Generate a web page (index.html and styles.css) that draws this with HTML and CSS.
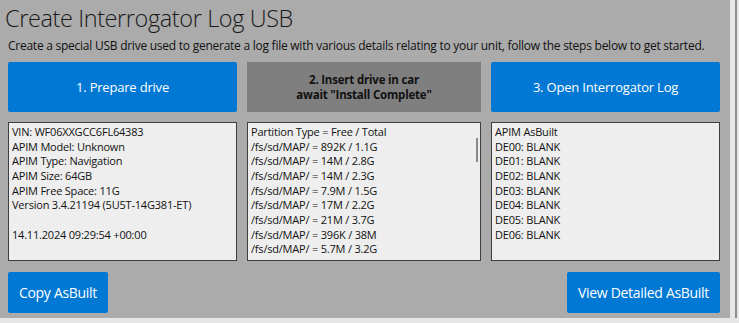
FILE: index.html
```html
<!DOCTYPE html>
<html>
<head>
<meta charset="utf-8">
<link rel="stylesheet" href="styles.css">
</head>
<body>
<div class="panel">
  <h1 class="title">Create Interrogator Log USB</h1>
  <p class="sub">Create a special USB drive used to generate a log file with various details relating to your unit, follow the steps below to get started.</p>
  <div class="grid">
    <button class="btn blue">1. Prepare drive</button>
    <button class="btn gray">2. Insert drive in car<br>await "Install Complete"</button>
    <button class="btn blue">3. Open Interrogator Log</button>
    <div class="box">
      <div>VIN: WF06XXGCC6FL64383</div>
      <div>APIM Model: Unknown</div>
      <div>APIM Type: Navigation</div>
      <div>APIM Size: 64GB</div>
      <div>APIM Free Space: 11G</div>
      <div>Version 3.4.21194 (5U5T-14G381-ET)</div>
      <div>&nbsp;</div>
      <div>14.11.2024 09:29:54 +00:00</div>
    </div>
    <div class="box scroll">
      <div>Partition Type = Free / Total</div>
      <div>/fs/sd/MAP/ = 892K / 1.1G</div>
      <div>/fs/sd/MAP/ = 14M / 2.8G</div>
      <div>/fs/sd/MAP/ = 14M / 2.3G</div>
      <div>/fs/sd/MAP/ = 7.9M / 1.5G</div>
      <div>/fs/sd/MAP/ = 17M / 2.2G</div>
      <div>/fs/sd/MAP/ = 21M / 3.7G</div>
      <div>/fs/sd/MAP/ = 396K / 38M</div>
      <div>/fs/sd/MAP/ = 5.7M / 3.2G</div>
      <div>/fs/sd/MAP/ = 24M / 3.1G</div>
      <span class="thumb"></span>
    </div>
    <div class="box">
      <div>APIM AsBuilt</div>
      <div>DE00: BLANK</div>
      <div>DE01: BLANK</div>
      <div>DE02: BLANK</div>
      <div>DE03: BLANK</div>
      <div>DE04: BLANK</div>
      <div>DE05: BLANK</div>
      <div>DE06: BLANK</div>
    </div>
  </div>
  <div class="actions">
    <button class="btn blue small">Copy AsBuilt</button>
    <button class="btn blue small">View Detailed AsBuilt</button>
  </div>
</div>
<div class="vscroll"></div>
</body>
</html>
```
FILE: styles.css
```css
html, body {
  margin: 0;
  padding: 0;
}
body {
  background: #e6e6e6;
  width: 739px;
  height: 323px;
  overflow: hidden;
  font-family: "Open Sans", "Noto Sans", sans-serif;
  color: #111;
}
.panel {
  width: 730px;
  height: 318px;
  box-sizing: border-box;
  background: #ababab;
  padding: 0 10px 0 8px;
  display: flex;
  flex-direction: column;
}
.title {
  margin: 3px 0 0 -3px;
  font-weight: 300;
  font-size: 23.5px;
  line-height: 30px;
  color: #1a1a1a;
  letter-spacing: -0.4px;
}
.sub {
  margin: 5px 0 0 0;
  font-size: 12px;
  line-height: 16px;
  letter-spacing: -0.25px;
  white-space: nowrap;
  color: #111;
}
.grid {
  margin-top: 8px;
  display: grid;
  grid-template-columns: 229px 234px 229px;
  grid-template-rows: 50px 139px;
  column-gap: 10px;
  row-gap: 10px;
}
.btn {
  border: none;
  border-radius: 2px;
  font-family: "Open Sans", "Noto Sans", sans-serif;
  padding: 0;
  margin: 0;
  white-space: nowrap;
}
.blue {
  background: #0078d4;
  color: #fff;
  font-size: 13px;
  letter-spacing: -0.2px;
}
.gray {
  background: #7f7f7f;
  color: #111;
  font-weight: 700;
  font-size: 11.5px;
  line-height: 15px;
  letter-spacing: -0.2px;
  border-radius: 0;
}
.box {
  position: relative;
  box-sizing: border-box;
  border: 1px solid #3e3e3e;
  background: #eeeeee;
  padding: 2px 3px;
  overflow: hidden;
  font-size: 11px;
  line-height: 14.67px;
  letter-spacing: -0.2px;
  color: #111;
}
.thumb {
  position: absolute;
  right: 2px;
  top: 15px;
  width: 2px;
  height: 24px;
  background: #8a8a8a;
}
.actions {
  margin-top: 11px;
  width: 712px;
  display: flex;
  justify-content: space-between;
}
.small {
  height: 41px;
  font-size: 14px;
  letter-spacing: -0.3px;
}
.actions .small:first-child {
  width: 100px;
}
.actions .small:last-child {
  width: 153px;
}
.vscroll {
  position: fixed;
  right: 2px;
  top: 0;
  width: 2px;
  height: 318px;
  background: #8e8e8e;
}
```
